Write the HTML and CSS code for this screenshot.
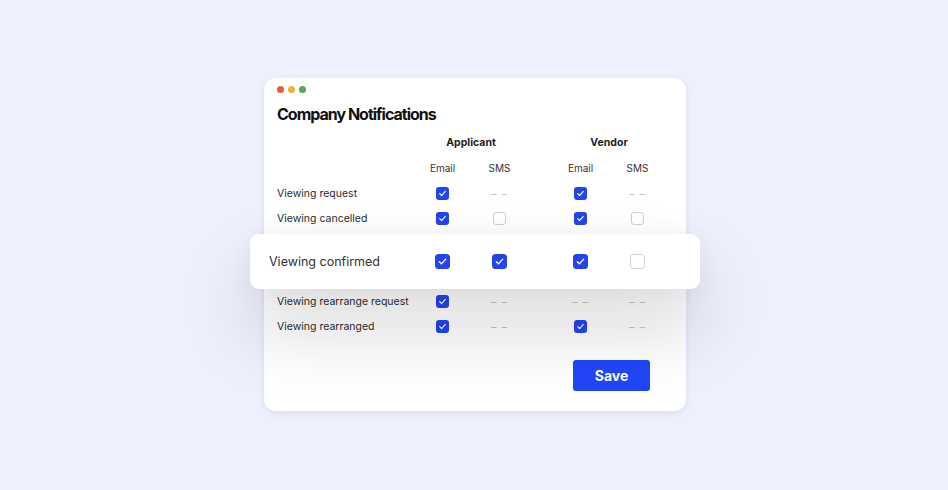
FILE: index.html
```html
<!DOCTYPE html>
<html lang="en">
<head>
  <meta charset="UTF-8">
  <meta name="viewport" content="width=device-width, initial-scale=1.0">
  <title>Company Notifications</title>

  <link rel="stylesheet" href="styles.css">
</head>
<body>
  <div class="card">
    <div class="dots">
      <span class="dot red"></span>
      <span class="dot yellow"></span>
      <span class="dot green"></span>
    </div>

    <h1 class="title">Company Notifications</h1>

    <div class="row head">
      <span class="label"></span>
      <div class="group"><span class="group-name">Applicant</span></div>
      <div class="group"><span class="group-name">Vendor</span></div>
    </div>

    <div class="row sub">
      <span class="label"></span>
      <div class="group"><span class="cell">Email</span><span class="cell">SMS</span></div>
      <div class="group"><span class="cell">Email</span><span class="cell">SMS</span></div>
    </div>

    <div class="row">
      <span class="label">Viewing request</span>
      <div class="group"><span class="cell"><i class="box on"></i></span><span class="cell"><i class="dash">– –</i></span></div>
      <div class="group"><span class="cell"><i class="box on"></i></span><span class="cell"><i class="dash">– –</i></span></div>
    </div>

    <div class="row">
      <span class="label">Viewing cancelled</span>
      <div class="group"><span class="cell"><i class="box on"></i></span><span class="cell"><i class="box"></i></span></div>
      <div class="group"><span class="cell"><i class="box on"></i></span><span class="cell"><i class="box"></i></span></div>
    </div>

    <div class="row highlight">
      <span class="label">Viewing confirmed</span>
      <div class="group"><span class="cell"><i class="box on"></i></span><span class="cell"><i class="box on"></i></span></div>
      <div class="group"><span class="cell"><i class="box on"></i></span><span class="cell"><i class="box"></i></span></div>
    </div>

    <div class="row">
      <span class="label">Viewing rearrange request</span>
      <div class="group"><span class="cell"><i class="box on"></i></span><span class="cell"><i class="dash">– –</i></span></div>
      <div class="group"><span class="cell"><i class="dash">– –</i></span><span class="cell"><i class="dash">– –</i></span></div>
    </div>

    <div class="row">
      <span class="label">Viewing rearranged</span>
      <div class="group"><span class="cell"><i class="box on"></i></span><span class="cell"><i class="dash">– –</i></span></div>
      <div class="group"><span class="cell"><i class="box on"></i></span><span class="cell"><i class="dash">– –</i></span></div>
    </div>

    <div class="actions">
      <button class="save">Save</button>
    </div>
  </div>
</body>
</html>
```

FILE: styles.css
```css
html, body{
  margin: 0;
  height: 100%;
}

body{
  background: #eef0fd;
  font-family: Inter, "Liberation Sans", sans-serif;
  color: #2b2b2b;
  display: flex;
  justify-content: center;
  align-items: flex-start;
}

.card{
  width: 396px;
  margin: 78px 0 0 2px;
  padding: 8px 13px 20px;
  background: #fff;
  border-radius: 12px;
  box-shadow: 0 2px 6px rgba(70,80,160,0.12);
  position: relative;
}

.dots{
  display: flex;
  gap: 4px;
}

.dot{
  display: block;
  width: 7px;
  height: 7px;
  border-radius: 50%;
}

.red{ background: #e0603f; }
.yellow{ background: #e9b53e; }
.green{ background: #55a957; }

.title{
  margin: 9px 0 0;
  font-size: 16px;
  line-height: 24px;
  font-weight: 700;
  letter-spacing: -1px;
  color: #111;
}

.row{
  display: flex;
  align-items: center;
  height: 25px;
  font-size: 10.5px;
}

.label{
  width: 137px;
  flex: none;
}

.group{
  display: flex;
  width: 114px;
  justify-content: center;
}

.group + .group{
  margin-left: 24px;
}

.cell{
  width: 57px;
  display: flex;
  justify-content: center;
  align-items: center;
}

.head{
  margin-top: 3px;
  height: 26px;
}

.group-name{
  font-weight: 700;
  font-size: 10.5px;
  color: #222;
}

.sub{
  height: 26px;
}

.sub .cell{
  font-size: 10px;
  color: #333;
}

.box{
  display: block;
  width: 13px;
  height: 13px;
  box-sizing: border-box;
  border: 1px solid #cfcfcf;
  border-radius: 3px;
  background: #fff;
}

.box.on{
  border: none;
  background: #2443f0 url("data:image/svg+xml,%3Csvg xmlns='http://www.w3.org/2000/svg' viewBox='0 0 14 14'%3E%3Cpath d='M4 7.2l2 2 4-4.4' fill='none' stroke='%23fff' stroke-width='1.3' stroke-linecap='round' stroke-linejoin='round'/%3E%3C/svg%3E") center / 100% no-repeat;
}

.dash{
  font-style: normal;
  font-size: 11px;
  color: #c4c4c8;
  letter-spacing: 1px;
}

.highlight{
  height: 55px;
  margin: 3px -27px 0;
  padding-left: 19px;
  background: #fff;
  border-radius: 9px;
  box-shadow: 0 40px 70px rgba(10,10,30,0.17), 0 4px 24px rgba(10,10,30,0.06);
  position: relative;
  z-index: 1;
}

.highlight .label{
  width: 145px;
  font-size: 12.5px;
  color: #333;
}

.highlight .box{
  width: 15px;
  height: 15px;
  border-radius: 3.5px;
}

.actions{
  display: flex;
  justify-content: flex-end;
  margin-top: 21px;
  padding-right: 23px;
}

.save{
  width: 77px;
  height: 31px;
  border: none;
  border-radius: 3px;
  background: #2146f5;
  color: #fff;
  font-family: Inter, "Liberation Sans", sans-serif;
  font-size: 14px;
  font-weight: 700;
}
```
